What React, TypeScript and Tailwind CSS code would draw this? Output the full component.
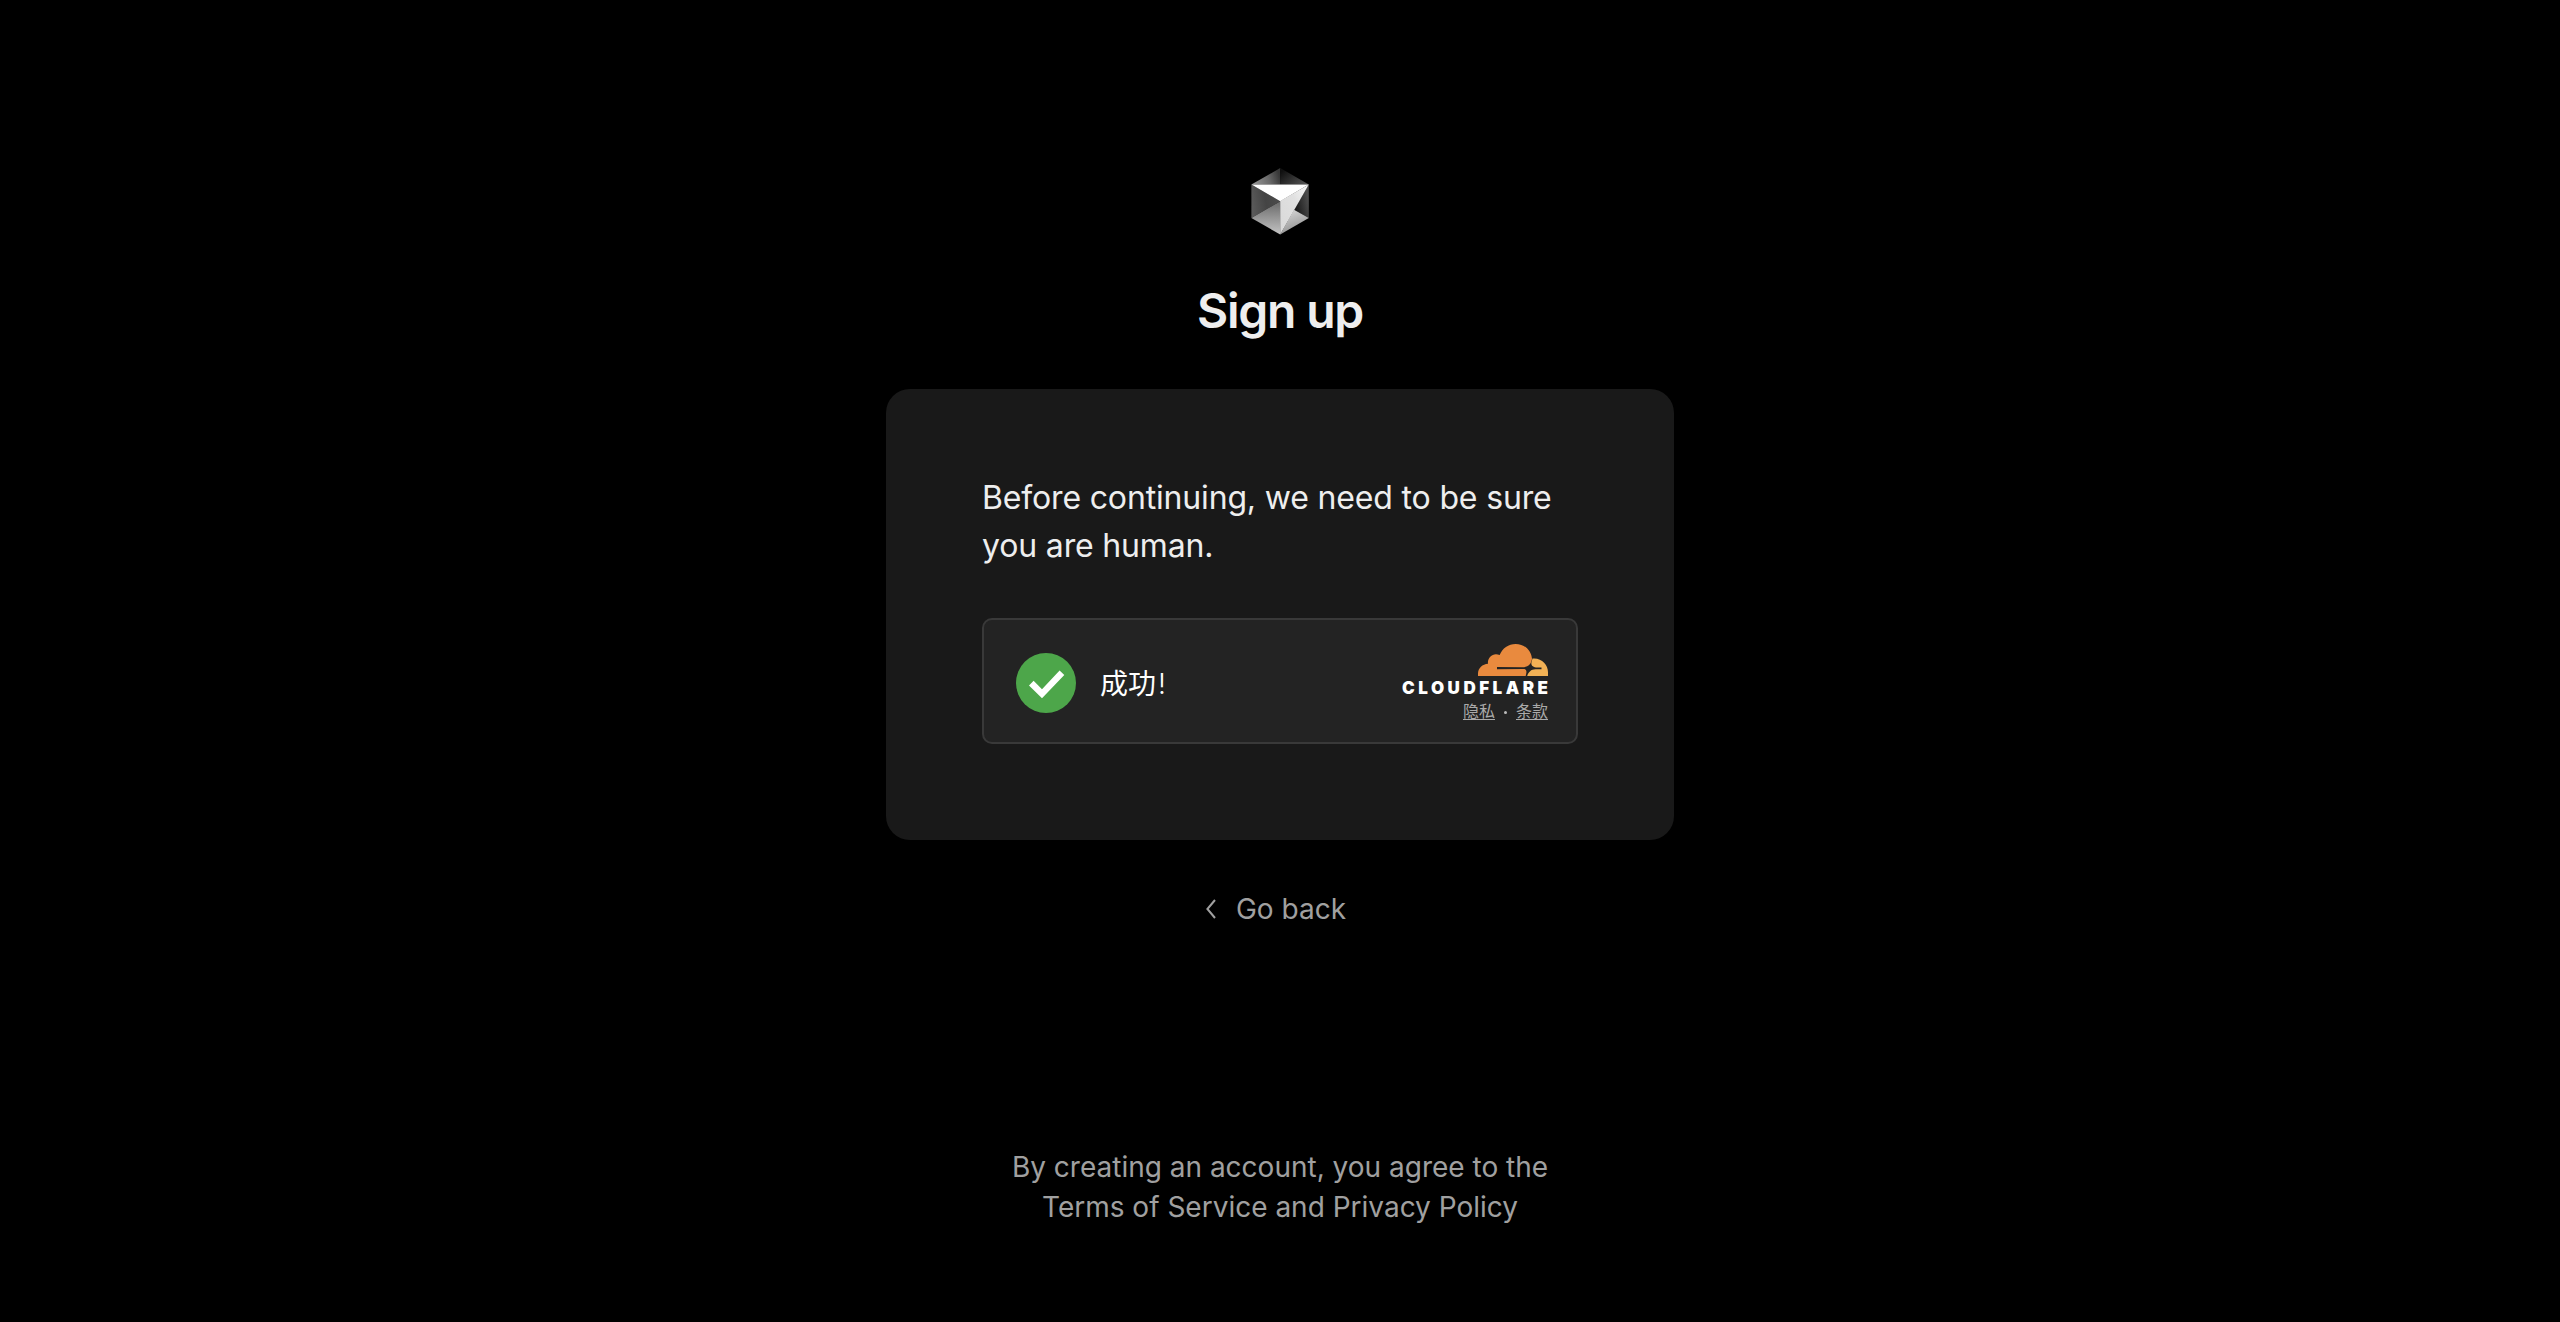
const LogoMark = () => (
  <svg width="60" height="68" viewBox="0 0 60 68" className="block">
    <defs>
      <linearGradient id="tl" x1="0" y1="0.8" x2="1" y2="0.6">
        <stop offset="0" stopColor="#999999" />
        <stop offset="0.6" stopColor="#6a6a6a" />
        <stop offset="1" stopColor="#383838" />
      </linearGradient>
      <linearGradient id="tr" x1="0" y1="0.3" x2="1" y2="1">
        <stop offset="0" stopColor="#101010" />
        <stop offset="1" stopColor="#5a5a5a" />
      </linearGradient>
      <linearGradient id="lf" x1="0" y1="0.6" x2="1" y2="0.4">
        <stop offset="0" stopColor="#5a5a5a" />
        <stop offset="0.5" stopColor="#444444" />
        <stop offset="1" stopColor="#4c4c4c" />
      </linearGradient>
      <linearGradient id="rt" x1="1" y1="0.5" x2="0" y2="1">
        <stop offset="0" stopColor="#4c4c4c" />
        <stop offset="1" stopColor="#0c0c0c" />
      </linearGradient>
      <linearGradient id="bt" x1="0" y1="0" x2="0" y2="1">
        <stop offset="0" stopColor="#686868" />
        <stop offset="1" stopColor="#c4c4c4" />
      </linearGradient>
      <linearGradient id="br" x1="0" y1="0" x2="0.4" y2="1">
        <stop offset="0" stopColor="#dddddd" />
        <stop offset="1" stopColor="#909090" />
      </linearGradient>
      <linearGradient id="fr" x1="1" y1="0" x2="0" y2="1">
        <stop offset="0" stopColor="#fafafa" />
        <stop offset="0.4" stopColor="#e0e0e0" />
        <stop offset="1" stopColor="#d8d8d8" />
      </linearGradient>
    </defs>
    <path d="M30.2 1 1.4 17.600H30.200Z" fill="url(#tl)" />
    <path d="M30.2 1 58.800 17.600H30.200Z" fill="url(#tr)" />
    <path d="M1.4 17.600 30.2 34.200 1.4 51Z" fill="url(#lf)" />
    <path d="M58.800 17.600V51L44 42.800Z" fill="url(#rt)" />
    <path d="M30.2 34.200 1.4 51 30.2 67.600Z" fill="url(#bt)" />
    <path d="M44 42.800 58.800 51 30.2 67.600Z" fill="url(#br)" />
    <path d="M58.800 17.400 30.2 34V67.600Z" fill="url(#fr)" />
    <path d="M1.4 17.400H58.800L30.2 34.200Z" fill="#fff" />
  </svg>
);

const Check = () => (
  <svg width="60" height="60" viewBox="0 0 60 60" className="block shrink-0">
    <circle cx="30" cy="30" r="30" fill="#4da64a" />
    <path d="M13 32.4 17.6 27.8 26 36.2 43.6 17.4 48.3 22 26 45.2Z" fill="#fff" />
  </svg>
);

const Cloud = () => (
  <svg width="70" height="32" viewBox="0 0 70 32" className="block">
    <path
      d="M0 32V29.5C0 24.300 4.500 19.900 10 19.700C9 13.500 15.500 7.800 21.700 11.100C24.200 4.200 30.600 0 37.600 0C46.300 0 53.300 6 54 15C53.200 19.500 51 22.600 46 23.200L19 23.100V25.200L45.500 25C47.800 25 48.600 26.400 48.400 28.600L47.700 32Z"
      fill="#e98a3e"
    />
    <path
      d="M54.500 14.500C63.500 13.500 70 20.500 70 28V32H49.200C50.500 28 53 25.200 57.500 25.200H63.500V23.400H58C54.500 23.200 52.800 20.800 53.500 18Z"
      fill="#f2b155"
    />
  </svg>
);

export default function App() {
  return (
    <main className="flex h-[1322px] w-full flex-col items-center overflow-hidden bg-black pt-[167px] font-['Inter','Noto_Sans_CJK_SC',sans-serif] text-[#eeeeee]">
      <LogoMark />
      <h1 className="mt-[44px] text-[48px] leading-[64px] font-semibold tracking-[-1.2px]">Sign up</h1>

      <section className="mt-[46px] h-[451px] w-[788px] rounded-[24px] bg-[#191919] px-24 pt-[85px]">
        <p className="text-[32px] leading-[48px] tracking-[-0.16px] whitespace-nowrap">
          Before continuing, we need to be sure
          <br />
          you are human.
        </p>
        <div className="mt-[48px] flex h-[126px] items-center justify-between rounded-[10px] border-2 border-[#393939] bg-[#232323] pt-[4px] pr-[28px] pl-[32px]">
          <div className="flex items-center gap-[24px]">
            <Check />
            <span className="mb-px font-['Noto_Sans_CJK_SC',sans-serif] text-[28px] leading-[40px] font-normal text-white">
              成功<span className="ml-[2px] font-['Inter',sans-serif] font-light">!</span>
            </span>
          </div>
          <div className="flex flex-col items-end">
            <Cloud />
            <div className="mt-[3px] mr-[-3.500px] text-[17px] leading-[18px] font-black tracking-[3.500px] text-white">CLOUDFLARE</div>
            <div className="mt-[2px] mb-px flex items-center gap-[9px] font-['Noto_Sans_CJK_SC',sans-serif] text-[16px] leading-[22px] font-normal text-[#aaaaaa]">
              <a className="underline underline-offset-2">隐私</a>
              <span className="mt-[5px] size-[3px] rounded-full bg-[#bbbbbb]" />
              <a className="underline underline-offset-2">条款</a>
            </div>
          </div>
        </div>
      </section>

      <a className="mt-[49px] mr-[8px] flex h-[40px] items-center text-[28px] leading-[40px] text-[#a0a0a0]">
        <svg width="10" height="20" viewBox="0 0 10 20" className="mr-[20px] block" fill="none" stroke="currentColor" strokeWidth="2">
          <path d="M9 1 1.400 10 9 19" />
        </svg>
        Go back
      </a>

      <p className="mt-[218px] text-center text-[28px] leading-[40px] text-[#a0a0a0]">
        By creating an account, you agree to the
        <br />
        Terms of Service and Privacy Policy
      </p>
    </main>
  );
}
